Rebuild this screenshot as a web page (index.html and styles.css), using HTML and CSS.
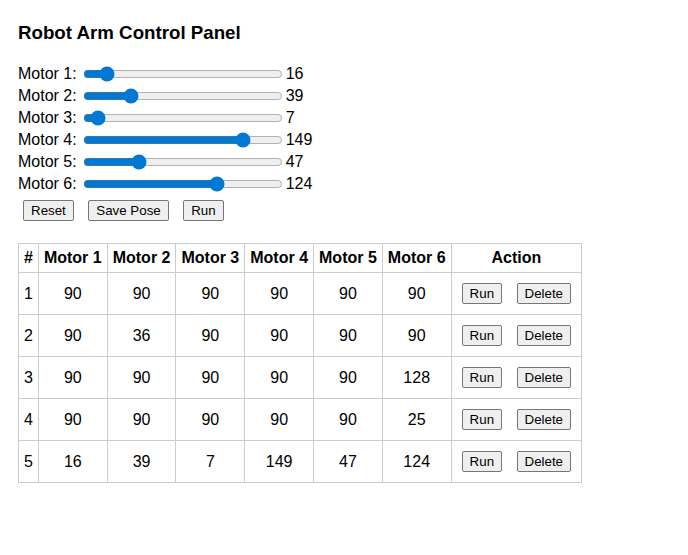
FILE: index.html
```html
<!DOCTYPE html>
<html>
<head>
<meta charset="utf-8">
<title>Robot Arm Control Panel</title>
<link rel="stylesheet" href="styles.css">
</head>
<body>
<h3 class="title">Robot Arm Control Panel</h3>
<div class="sliders">
  <div class="row"><label>Motor 1:</label> <input type="range" min="0" max="180" value="16"><span class="val">16</span></div>
  <div class="row"><label>Motor 2:</label> <input type="range" min="0" max="180" value="39"><span class="val">39</span></div>
  <div class="row"><label>Motor 3:</label> <input type="range" min="0" max="180" value="7"><span class="val">7</span></div>
  <div class="row"><label>Motor 4:</label> <input type="range" min="0" max="180" value="149"><span class="val">149</span></div>
  <div class="row"><label>Motor 5:</label> <input type="range" min="0" max="180" value="47"><span class="val">47</span></div>
  <div class="row"><label>Motor 6:</label> <input type="range" min="0" max="180" value="124"><span class="val">124</span></div>
</div>
<div class="controls">
  <button class="btn">Reset</button> <button class="btn">Save Pose</button> <button class="btn">Run</button>
</div>
<table class="poses">
  <thead>
    <tr><th>#</th><th>Motor 1</th><th>Motor 2</th><th>Motor 3</th><th>Motor 4</th><th>Motor 5</th><th>Motor 6</th><th>Action</th></tr>
  </thead>
  <tbody>
    <tr><td>1</td><td>90</td><td>90</td><td>90</td><td>90</td><td>90</td><td>90</td><td><button class="btn">Run</button> <button class="btn">Delete</button></td></tr>
    <tr><td>2</td><td>90</td><td>36</td><td>90</td><td>90</td><td>90</td><td>90</td><td><button class="btn">Run</button> <button class="btn">Delete</button></td></tr>
    <tr><td>3</td><td>90</td><td>90</td><td>90</td><td>90</td><td>90</td><td>128</td><td><button class="btn">Run</button> <button class="btn">Delete</button></td></tr>
    <tr><td>4</td><td>90</td><td>90</td><td>90</td><td>90</td><td>90</td><td>25</td><td><button class="btn">Run</button> <button class="btn">Delete</button></td></tr>
    <tr><td>5</td><td>16</td><td>39</td><td>7</td><td>149</td><td>47</td><td>124</td><td><button class="btn">Run</button> <button class="btn">Delete</button></td></tr>
  </tbody>
</table>
</body>
</html>
```
FILE: styles.css
```css
body {
  margin: 0;
  padding: 22px 18px;
  font-family: "Liberation Sans", Arial, sans-serif;
  font-size: 16px;
  color: #000;
  background: #fff;
}
.title {
  margin: 0 0 19px 0;
  font-size: 18.72px;
  font-weight: bold;
  line-height: 22px;
}
.sliders {
  display: flex;
  flex-direction: column;
}
.row {
  display: flex;
  align-items: center;
  height: 22px;
}
.row label {
  margin-right: 4px;
}
.row input[type="range"] {
  width: 200px;
  margin: 2px 3px 2px 2px;
  accent-color: #0078d4;
}
.controls {
  margin-top: 0;
}
.btn {
  font-family: "Liberation Sans", Arial, sans-serif;
  font-size: 13.333px;
  margin: 5px;
  padding: 2px 7px;
  border: 1px solid #767676;
  border-radius: 2px;
  background: #efefef;
  color: #000;
  line-height: 15px;
}
.poses {
  margin-top: 17px;
  border-collapse: collapse;
}
.poses th, .poses td {
  border: 1px solid #cccccc;
  padding: 5px;
  text-align: center;
}
.poses th {
  font-weight: bold;
}
```
